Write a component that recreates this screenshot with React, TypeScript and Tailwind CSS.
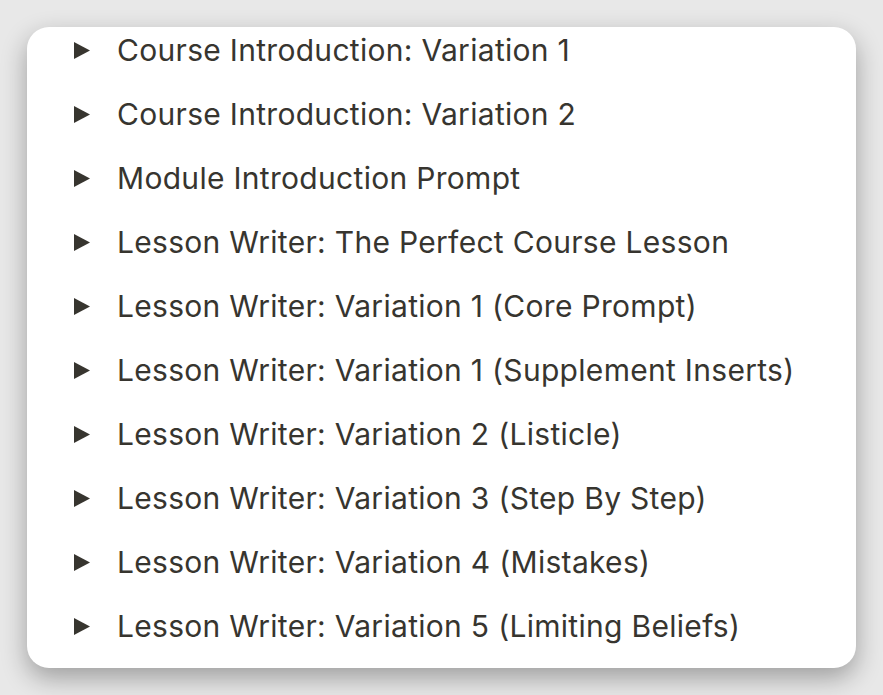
import React from "react";

const items = [
  "Course Introduction: Variation 1",
  "Course Introduction: Variation 2",
  "Module Introduction Prompt",
  "Lesson Writer: The Perfect Course Lesson",
  "Lesson Writer: Variation 1 (Core Prompt)",
  "Lesson Writer: Variation 1 (Supplement Inserts)",
  "Lesson Writer: Variation 2 (Listicle)",
  "Lesson Writer: Variation 3 (Step By Step)",
  "Lesson Writer: Variation 4 (Mistakes)",
  "Lesson Writer: Variation 5 (Limiting Beliefs)",
];

function Arrow() {
  return (
    <svg width="16" height="17" viewBox="0 0 16 17" className="shrink-0">
      <polygon points="0,0 16,8.5 0,17" fill="#37352f" />
    </svg>
  );
}

export default function App() {
  return (
    <div className="w-[883px] h-[695px] bg-[#e8e8e8] pt-[27px] pl-[27px]">
      <div
        className="w-[829px] h-[641px] bg-white rounded-[22px] shadow-[0_10px_26px_rgba(0,0,0,0.32)] flex flex-col gap-[18px] pb-[19px] overflow-hidden"
        style={{ fontFamily: "Inter, 'Liberation Sans', sans-serif" }}
      >
        {items.map((t) => (
          <div key={t} className="h-[46px] flex items-center pl-[47px]">
            <Arrow />
            <span className="ml-[27px] text-[30px] tracking-[0.3px] text-[#37352f] whitespace-nowrap">{t}</span>
          </div>
        ))}
      </div>
    </div>
  );
}
